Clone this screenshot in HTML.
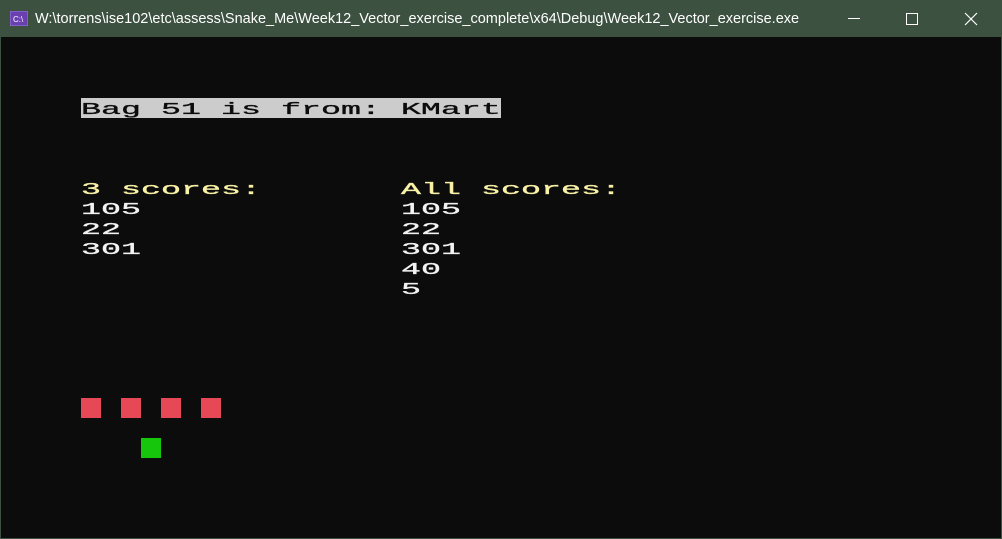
<!DOCTYPE html>
<html><head><style>
body{margin:0;width:1002px;height:539px;overflow:hidden;background:#3c5140;position:relative;font-family:"Liberation Sans",sans-serif}
.con{position:absolute;left:1px;top:37px;width:1000px;height:501px;background:#0c0c0c}
.t{position:absolute;font-family:"Liberation Mono",monospace;font-size:17px;line-height:20px;height:20px;white-space:pre;transform-origin:0 0;transform:translateY(3px) scaleX(1.96);font-weight:normal;-webkit-text-stroke:0.3px currentColor}
.w{color:#f2f2f2}.y{color:#f9f1a5}
.sq{position:absolute;width:20px;height:20px}
</style></head><body>
<svg style="position:absolute;left:10px;top:11px" width="18" height="15"><rect x="0" y="0" width="18" height="15" fill="#6a3fb0" stroke="#9b7ee0"/><text x="3" y="11" font-size="8" fill="#fff" font-family="Liberation Sans">C:\</text></svg>
<div style="position:absolute;left:35px;top:10px;color:#fff;font-size:14.5px;line-height:18px">W:\torrens\ise102\etc\assess\Snake_Me\Week12_Vector_exercise_complete\x64\Debug\Week12_Vector_exercise.exe</div>
<div style="position:absolute;left:848px;top:18px;width:12px;height:1px;background:#fff"></div>
<div style="position:absolute;left:906px;top:13px;width:10px;height:10px;border:1px solid #fff"></div>
<svg style="position:absolute;left:964px;top:12px" width="14" height="14"><path d="M1 1L13 13M13 1L1 13" stroke="#fff" stroke-width="1.2"/></svg>
<div class="con"></div>
<div style="position:absolute;left:81px;top:98px;width:420px;height:20px;background:#cccccc"></div>
<div class="t" style="left:81px;top:98px;color:#0c0c0c">Bag 51 is from: KMart</div>
<div class="t y" style="left:81px;top:178px">3 scores:</div>
<div class="t w" style="left:81px;top:198px">105</div>
<div class="t w" style="left:81px;top:218px">22</div>
<div class="t w" style="left:81px;top:238px">301</div>
<div class="t y" style="left:401px;top:178px">All scores:</div>
<div class="t w" style="left:401px;top:198px">105</div>
<div class="t w" style="left:401px;top:218px">22</div>
<div class="t w" style="left:401px;top:238px">301</div>
<div class="t w" style="left:401px;top:258px">40</div>
<div class="t w" style="left:401px;top:278px">5</div>
<div class="sq" style="left:81px;top:398px;background:#e74856"></div>
<div class="sq" style="left:121px;top:398px;background:#e74856"></div>
<div class="sq" style="left:161px;top:398px;background:#e74856"></div>
<div class="sq" style="left:201px;top:398px;background:#e74856"></div>
<div class="sq" style="left:141px;top:438px;background:#16c60c"></div>
</body></html>
